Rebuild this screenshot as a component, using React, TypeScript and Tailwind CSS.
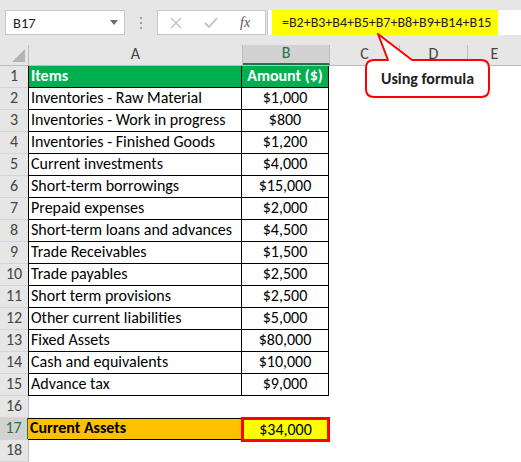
import React from "react";

const rows: [string, string][] = [
  ["Inventories - Raw Material", "$1,000"],
  ["Inventories - Work in progress", "$800"],
  ["Inventories - Finished Goods", "$1,200"],
  ["Current investments", "$4,000"],
  ["Short-term borrowings", "$15,000"],
  ["Prepaid expenses", "$2,000"],
  ["Short-term loans and advances", "$4,500"],
  ["Trade Receivables", "$1,500"],
  ["Trade payables", "$2,500"],
  ["Short term provisions", "$2,500"],
  ["Other current liabilities", "$5,000"],
  ["Fixed Assets", "$80,000"],
  ["Cash and equivalents", "$10,000"],
  ["Advance tax", "$9,000"],
];

const font = { fontFamily: "Carlito, Lato, 'Liberation Sans', sans-serif" };

function RowHead({ n, active }: { n: number; active?: boolean }) {
  return (
    <div
      className={`w-[29px] shrink-0 h-full flex items-end pb-[1px] justify-center border-b border-[#d4d4d4] text-[16px] ${
        active
          ? "bg-[#d2d2d2] text-[#217346] border-r-2 border-r-[#217346]"
          : "bg-[#e6e6e6] text-[#444] border-r border-r-[#bdbdbd]"
      }`}
    >
      {n}
    </div>
  );
}

export default function App() {
  return (
    <div className="relative w-[521px] h-[462px] bg-white overflow-hidden text-[16px] leading-[20px] text-black" style={font}>
      {/* toolbar */}
      <div className="h-[45px] bg-[#e6e6e6] flex items-start pt-[10px] pl-[5px]">
        <div className="w-[120px] h-[25px] bg-white border border-[#c6c6c6] flex items-center justify-between pl-[7px] pr-[6px] text-[14.5px] text-[#222]">
          <span>B17</span>
          <svg width="8" height="5" viewBox="0 0 8 5">
            <path d="M0 0h8L4 5z" fill="#6d6d6d" />
          </svg>
        </div>
        <div className="w-[32px] h-[25px] flex flex-col items-center justify-center gap-[3px]">
          <span className="w-[2px] h-[2px] bg-[#a0a0a0]" />
          <span className="w-[2px] h-[2px] bg-[#a0a0a0]" />
          <span className="w-[2px] h-[2px] bg-[#a0a0a0]" />
        </div>
        <div className="w-[109px] h-[25px] bg-white border border-[#c6c6c6] flex items-center pl-[12px]">
          <svg width="12" height="12" viewBox="0 0 12 12">
            <path d="M1 1l10 10M11 1L1 11" stroke="#c0c0c0" strokeWidth="1.4" />
          </svg>
          <svg className="ml-[22px]" width="14" height="11" viewBox="0 0 14 11">
            <path d="M1 6l4 4 8-9" stroke="#c0c0c0" strokeWidth="1.8" fill="none" />
          </svg>
          <span className="ml-[22px] text-[#555] italic text-[14px]" style={{ fontFamily: "'Liberation Serif', serif" }}>
            fx
          </span>
        </div>
        <div className="flex-1 h-[25px] bg-white border-l border-[#c6c6c6] ml-[1px] flex items-stretch pl-[4px]">
          <div className="w-[226px] bg-[#ffff00] flex items-center pl-[10px] text-[14px] text-[#222]">
            =B2+B3+B4+B5+B7+B8+B9+B14+B15
          </div>
        </div>
      </div>

      {/* column headers */}
      <div className="h-[21px] flex bg-[#e6e6e6] border-b border-[#bdbdbd] text-[#444] text-[16px]">
        <div className="w-[29px] shrink-0 relative border-r border-[#bdbdbd]">
          <svg className="absolute right-[3px] bottom-[3px]" width="13" height="13" viewBox="0 0 13 13">
            <path d="M13 0V13H0z" fill="#b4b4b4" />
          </svg>
        </div>
        <div className="w-[214px] shrink-0 flex items-end pb-[1px] justify-center border-r border-[#bdbdbd]">A</div>
        <div className="w-[87px] shrink-0 flex items-end justify-center bg-[#d2d2d2] text-[#217346] border-b-2 border-[#217346] border-r border-r-[#bdbdbd]">
          B
        </div>
        <div className="w-[70px] shrink-0 flex items-end pb-[1px] justify-center border-r border-[#bdbdbd]">C</div>
        <div className="w-[68px] shrink-0 flex items-end pb-[1px] justify-center border-r border-[#bdbdbd]">D</div>
        <div className="flex-1 flex items-end pb-[1px] justify-center">E</div>
      </div>

      {/* row 1 */}
      <div className="h-[22px] flex">
        <RowHead n={1} />
        <div className="w-[214px] shrink-0 bg-[#00b050] text-white font-bold flex items-end pb-[1px] pl-[2px] border-b border-r border-l border-black -ml-px">
          Items
        </div>
        <div className="w-[87px] shrink-0 bg-[#00b050] text-white font-bold flex items-end pb-[1px] justify-center border-b border-r border-black">
          Amount ($)
        </div>
      </div>

      {rows.map(([label, amt], i) => (
        <div key={label} className="h-[22px] flex">
          <RowHead n={i + 2} />
          <div className="w-[214px] shrink-0 flex items-end pb-[1px] pl-[2px] border-b border-r border-l border-black -ml-px">
            {label}
          </div>
          <div className="w-[87px] shrink-0 flex items-end pb-[1px] justify-center border-b border-r border-black">{amt}</div>
        </div>
      ))}

      {/* row 16 */}
      <div className="h-[22px] flex">
        <RowHead n={16} />
      </div>

      {/* row 17 */}
      <div className="h-[22px] flex">
        <RowHead n={17} active />
        <div className="w-[214px] shrink-0 bg-[#ffc000] font-bold flex items-end pb-[1px] pl-[2px] border-y border-black -ml-px">
          Current Assets
        </div>
        <div className="relative w-[87px] shrink-0">
          <div className="absolute -left-[1px] -right-[1px] -top-[1px] -bottom-[2px] bg-[#ffff00] border-[3px] border-[#ff0000] flex items-center justify-center">
            $34,000
          </div>
        </div>
      </div>

      {/* row 18 */}
      <div className="h-[22px] flex">
        <RowHead n={18} />
      </div>

      {/* callout */}
      <svg className="absolute left-[360px] top-[30px]" width="140" height="72" viewBox="0 0 140 72">
        <path
          d="M14 30 H28 L18 4 L52 30 H121 Q129 30 129 38 V59 Q129 67 121 67 H14 Q6 67 6 59 V38 Q6 30 14 30 Z"
          fill="white"
          stroke="#ff0000"
          strokeWidth="2"
          strokeLinejoin="round"
        />
      </svg>
      <div className="absolute left-[366px] top-[61px] w-[123px] h-[36px] flex items-center justify-center font-bold text-[16px] text-[#222]">
        Using formula
      </div>
    </div>
  );
}
